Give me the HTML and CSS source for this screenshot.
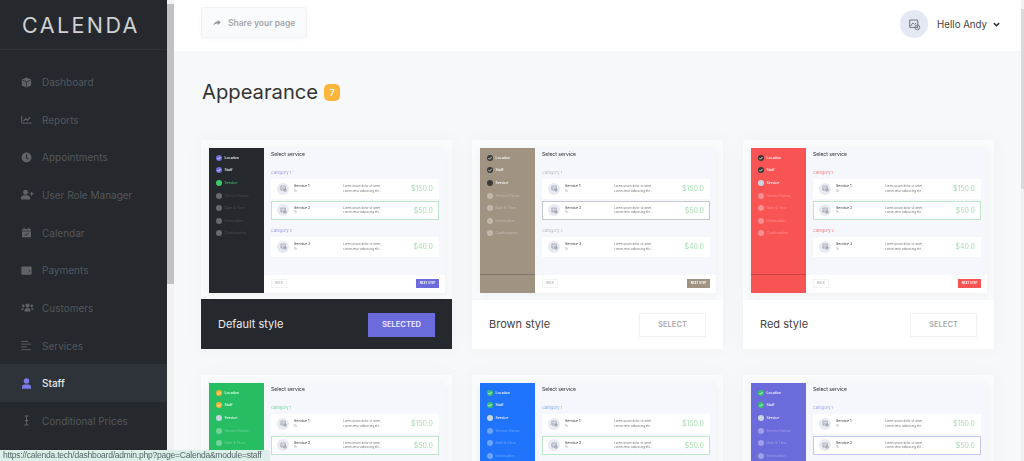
FILE: index.html
```html
<!DOCTYPE html>
<html lang="en">
<head>
<meta charset="utf-8">
<title>Appearance</title>
<link rel="stylesheet" href="styles.css">
</head>
<body>
<svg class="defs" width="0" height="0" aria-hidden="true">
  <symbol id="pic" viewBox="0 0 16 16"><path d="M2 2.5h10v9H2z" fill="none" stroke="currentColor" stroke-width="1.2"/><path d="M3 10l3-4 2 2 2-2" fill="none" stroke="currentColor" stroke-width="1.1"/><circle cx="11.5" cy="11.5" r="3" fill="none" stroke="currentColor" stroke-width="1.1"/><path d="M11.5 10v3" stroke="currentColor" stroke-width=".9"/></symbol>
  <symbol id="check" viewBox="0 0 10 10"><path d="M2.5 5.2l1.8 1.8 3.2-3.6" fill="none" stroke="currentColor" stroke-width="1.3"/></symbol>
</svg>
<div class="app">
  <aside class="sidebar">
    <div class="logo">CALENDA</div>
    <nav class="nav">
      <a class="nav-item"><svg class="nav-icon" viewBox="0 0 16 16"><path d="M8 .8l6.8 3v8.4L8 15.2 1.2 12.2V3.800z"/><path d="M2 4.300l6 2.900 6-2.900M8 7.200v7.500" fill="none" stroke="#25292e" stroke-width="1.100"/></svg>Dashboard</a>
      <a class="nav-item"><svg class="nav-icon" viewBox="0 0 16 16"><path d="M1 2.500v10.700h14.500" fill="none" stroke="currentColor" stroke-width="1.400"/><path d="M3.500 10.500l3.200-3.500 2.600 2 4.200-4.500" fill="none" stroke="currentColor" stroke-width="1.600"/></svg>Reports</a>
      <a class="nav-item"><svg class="nav-icon" viewBox="0 0 16 16"><circle cx="8" cy="8" r="7.200"/><path d="M8 3.500V8.500l3 1.800" fill="none" stroke="#25292e" stroke-width="1.500"/></svg>Appointments</a>
      <a class="nav-item"><svg class="nav-icon wide" viewBox="0 0 20 16"><circle cx="7" cy="4.500" r="3.800"/><path d="M0 15.500v-1.800C0 11 2.500 9.300 4.500 9.300h5c2 0 4.500 1.700 4.500 4.400v1.800z"/><path d="M16.500 4v6M13.500 7h6" stroke="currentColor" stroke-width="1.600"/></svg>User Role Manager</a>
      <a class="nav-item"><svg class="nav-icon" viewBox="0 0 16 16"><path d="M1.500 3h13v12h-13z"/><path d="M4.500 .8v3.500M11.500 .8v3.500" stroke="currentColor" stroke-width="1.600"/><path d="M1.500 5.800h13" stroke="#25292e"/><path d="M5 10.500l2 2 4-4" fill="none" stroke="#25292e" stroke-width="1.400"/></svg>Calendar</a>
      <a class="nav-item"><svg class="nav-icon" viewBox="0 0 16 16"><path d="M.5 3.500q0-1.500 1.500-1.500h12q1.500 0 1.500 1.500v9q0 1.500-1.500 1.500H2q-1.500 0-1.500-1.500z"/><circle cx="12.500" cy="8.500" r="1" fill="#25292e"/></svg>Payments</a>
      <a class="nav-item"><svg class="nav-icon wide" viewBox="0 0 20 16"><circle cx="10" cy="5" r="3"/><circle cx="3.500" cy="5.500" r="2"/><circle cx="16.500" cy="5.500" r="2"/><path d="M5.500 14v-2q0-3 3-3h3q3 0 3 3v2zM0 11.500q0-2.500 2.500-2.500h2L3.800 11.500zM20 11.500q0-2.500-2.500-2.500h-2l.7 2.500z"/></svg>Customers</a>
      <a class="nav-item"><svg class="nav-icon" viewBox="0 0 16 16"><path d="M.5 2h10M.5 6h14M.5 10h8M.5 14h14" stroke="currentColor" stroke-width="1.300"/></svg>Services</a>
      <a class="nav-item active"><svg class="nav-icon" viewBox="0 0 16 16"><circle cx="8" cy="4.500" r="4"/><path d="M1.500 15.500v-2.500q0-3.500 3.500-3.500h6q3.500 0 3.500 3.500v2.500z"/></svg>Staff</a>
      <a class="nav-item"><svg class="nav-icon" viewBox="0 0 16 16"><path d="M5 1.500h6M5 14.500h6M8 1.500v13M5.500 8h5" fill="none" stroke="currentColor" stroke-width="1.500"/></svg>Conditional Prices</a>
    </nav>
  </aside>
  <div class="side-scroll"><div class="side-thumb"></div></div>
  <div class="main">
    <header class="topbar">
      <button class="share"><svg class="share-icon" viewBox="0 0 16 16"><path d="M9.500 2l6 5-6 5V9C5.500 9 3 10 1 13.500 1.500 8.500 4.500 5 9.500 5z"/></svg>Share your page</button>
      <div class="user">
        <span class="avatar"><svg class="avatar-icon"><use href="#pic"/></svg></span>
        <span class="hello">Hello Andy</span>
        <svg class="chev" viewBox="0 0 10 7"><path d="M1.200 1.500L5 5.200l3.800-3.700" fill="none" stroke="currentColor" stroke-width="2.200"/></svg>
      </div>
    </header>
    <main class="content">
      <h1 class="title">Appearance <span class="badge">7</span></h1>
      <div class="grid">

        <section class="card t-default">
          <div class="shot"><div class="preview">
            <div class="p-side">
              <div class="step done"><i><svg><use href="#check"/></svg></i>Location</div>
              <div class="step done"><i><svg><use href="#check"/></svg></i>Staff</div>
              <div class="step cur"><i></i>Service</div>
              <div class="step"><i></i>Service Extras</div>
              <div class="step"><i></i>Date &amp; Time</div>
              <div class="step"><i></i>Information</div>
              <div class="step"><i></i>Confirmation</div>
            </div>
            <div class="p-body">
              <div class="p-scroll">
                <div class="p-title">Select service</div>
                <div class="p-cat">Category 1</div>
                <div class="p-row"><span class="p-ic"><svg><use href="#pic"/></svg></span><span class="p-name">Service 1<small>1h</small></span><span class="p-desc">Lorem ipsum dolor sit amet, consectetur adipiscing elit...</span><span class="p-price">$150.0</span></div>
                <div class="p-row sel"><span class="p-ic"><svg><use href="#pic"/></svg></span><span class="p-name">Service 2<small>1h</small></span><span class="p-desc">Lorem ipsum dolor sit amet, consectetur adipiscing elit...</span><span class="p-price">$50.0</span></div>
                <div class="p-cat two">Category 2</div>
                <div class="p-row"><span class="p-ic"><svg><use href="#pic"/></svg></span><span class="p-name">Service 3<small>1h</small></span><span class="p-desc">Lorem ipsum dolor sit amet, consectetur adipiscing elit...</span><span class="p-price">$40.0</span></div>
              </div>
              <div class="p-foot"><span class="p-back">BACK</span><span class="p-next">NEXT STEP</span></div>
            </div>
          </div></div>
          <div class="foot dark"><span class="name">Default style</span><span class="btn on">SELECTED</span></div>
        </section>

        <section class="card t-brown">
          <div class="shot"><div class="preview">
            <div class="p-side">
              <div class="step done"><i><svg><use href="#check"/></svg></i>Location</div>
              <div class="step done"><i><svg><use href="#check"/></svg></i>Staff</div>
              <div class="step cur"><i></i>Service</div>
              <div class="step"><i></i>Service Extras</div>
              <div class="step"><i></i>Date &amp; Time</div>
              <div class="step"><i></i>Information</div>
              <div class="step"><i></i>Confirmation</div>
              <div class="p-rule"></div>
            </div>
            <div class="p-body">
              <div class="p-scroll">
                <div class="p-title">Select service</div>
                <div class="p-cat">Category 1</div>
                <div class="p-row"><span class="p-ic"><svg><use href="#pic"/></svg></span><span class="p-name">Service 1<small>1h</small></span><span class="p-desc">Lorem ipsum dolor sit amet, consectetur adipiscing elit...</span><span class="p-price">$150.0</span></div>
                <div class="p-row sel"><span class="p-ic"><svg><use href="#pic"/></svg></span><span class="p-name">Service 2<small>1h</small></span><span class="p-desc">Lorem ipsum dolor sit amet, consectetur adipiscing elit...</span><span class="p-price">$50.0</span></div>
                <div class="p-cat two">Category 2</div>
                <div class="p-row"><span class="p-ic"><svg><use href="#pic"/></svg></span><span class="p-name">Service 3<small>1h</small></span><span class="p-desc">Lorem ipsum dolor sit amet, consectetur adipiscing elit...</span><span class="p-price">$40.0</span></div>
              </div>
              <div class="p-foot"><span class="p-back">BACK</span><span class="p-next">NEXT STEP</span></div>
            </div>
          </div></div>
          <div class="foot"><span class="name">Brown style</span><span class="btn">SELECT</span></div>
        </section>

        <section class="card t-red">
          <div class="shot"><div class="preview">
            <div class="p-side">
              <div class="step done"><i><svg><use href="#check"/></svg></i>Location</div>
              <div class="step done"><i><svg><use href="#check"/></svg></i>Staff</div>
              <div class="step cur"><i></i>Service</div>
              <div class="step"><i></i>Service Extras</div>
              <div class="step"><i></i>Date &amp; Time</div>
              <div class="step"><i></i>Information</div>
              <div class="step"><i></i>Confirmation</div>
              <div class="p-rule"></div>
            </div>
            <div class="p-body">
              <div class="p-scroll">
                <div class="p-title">Select service</div>
                <div class="p-cat">Category 1</div>
                <div class="p-row"><span class="p-ic"><svg><use href="#pic"/></svg></span><span class="p-name">Service 1<small>1h</small></span><span class="p-desc">Lorem ipsum dolor sit amet, consectetur adipiscing elit...</span><span class="p-price">$150.0</span></div>
                <div class="p-row sel"><span class="p-ic"><svg><use href="#pic"/></svg></span><span class="p-name">Service 2<small>1h</small></span><span class="p-desc">Lorem ipsum dolor sit amet, consectetur adipiscing elit...</span><span class="p-price">$50.0</span></div>
                <div class="p-cat two">Category 2</div>
                <div class="p-row"><span class="p-ic"><svg><use href="#pic"/></svg></span><span class="p-name">Service 3<small>1h</small></span><span class="p-desc">Lorem ipsum dolor sit amet, consectetur adipiscing elit...</span><span class="p-price">$40.0</span></div>
              </div>
              <div class="p-foot"><span class="p-back">BACK</span><span class="p-next">NEXT STEP</span></div>
            </div>
          </div></div>
          <div class="foot"><span class="name">Red style</span><span class="btn">SELECT</span></div>
        </section>

        <section class="card t-green">
          <div class="shot"><div class="preview">
            <div class="p-side">
              <div class="step done"><i><svg><use href="#check"/></svg></i>Location</div>
              <div class="step done"><i><svg><use href="#check"/></svg></i>Staff</div>
              <div class="step cur"><i></i>Service</div>
              <div class="step"><i></i>Service Extras</div>
              <div class="step"><i></i>Date &amp; Time</div>
            </div>
            <div class="p-body">
              <div class="p-scroll">
                <div class="p-title">Select service</div>
                <div class="p-cat">Category 1</div>
                <div class="p-row"><span class="p-ic"><svg><use href="#pic"/></svg></span><span class="p-name">Service 1<small>1h</small></span><span class="p-desc">Lorem ipsum dolor sit amet, consectetur adipiscing elit...</span><span class="p-price">$150.0</span></div>
                <div class="p-row sel"><span class="p-ic"><svg><use href="#pic"/></svg></span><span class="p-name">Service 2<small>1h</small></span><span class="p-desc">Lorem ipsum dolor sit amet, consectetur adipiscing elit...</span><span class="p-price">$50.0</span></div>
              </div>
            </div>
          </div></div>
        </section>

        <section class="card t-blue">
          <div class="shot"><div class="preview">
            <div class="p-side">
              <div class="step done"><i><svg><use href="#check"/></svg></i>Location</div>
              <div class="step done"><i><svg><use href="#check"/></svg></i>Staff</div>
              <div class="step cur"><i></i>Service</div>
              <div class="step"><i></i>Service Extras</div>
              <div class="step"><i></i>Date &amp; Time</div>
              <div class="step"><i></i>Information</div>
            </div>
            <div class="p-body">
              <div class="p-scroll">
                <div class="p-title">Select service</div>
                <div class="p-cat">Category 1</div>
                <div class="p-row"><span class="p-ic"><svg><use href="#pic"/></svg></span><span class="p-name">Service 1<small>1h</small></span><span class="p-desc">Lorem ipsum dolor sit amet, consectetur adipiscing elit...</span><span class="p-price">$150.0</span></div>
                <div class="p-row sel"><span class="p-ic"><svg><use href="#pic"/></svg></span><span class="p-name">Service 2<small>1h</small></span><span class="p-desc">Lorem ipsum dolor sit amet, consectetur adipiscing elit...</span><span class="p-price">$50.0</span></div>
              </div>
            </div>
          </div></div>
        </section>

        <section class="card t-purple">
          <div class="shot"><div class="preview">
            <div class="p-side">
              <div class="step done"><i><svg><use href="#check"/></svg></i>Location</div>
              <div class="step done"><i><svg><use href="#check"/></svg></i>Staff</div>
              <div class="step cur"><i></i>Service</div>
              <div class="step"><i></i>Service Extras</div>
              <div class="step"><i></i>Date &amp; Time</div>
              <div class="step"><i></i>Information</div>
            </div>
            <div class="p-body">
              <div class="p-scroll">
                <div class="p-title">Select service</div>
                <div class="p-cat">Category 1</div>
                <div class="p-row"><span class="p-ic"><svg><use href="#pic"/></svg></span><span class="p-name">Service 1<small>1h</small></span><span class="p-desc">Lorem ipsum dolor sit amet, consectetur adipiscing elit...</span><span class="p-price">$150.0</span></div>
                <div class="p-row sel"><span class="p-ic"><svg><use href="#pic"/></svg></span><span class="p-name">Service 2<small>1h</small></span><span class="p-desc">Lorem ipsum dolor sit amet, consectetur adipiscing elit...</span><span class="p-price">$50.0</span></div>
              </div>
            </div>
          </div></div>
        </section>

      </div>
    </main>
  </div>
  <div class="page-scroll"><div class="page-thumb"></div></div>
</div>
<div class="status">https://calenda.tech/dashboard/admin.php?page=Calenda&amp;module=staff</div>
</body>
</html>
```
FILE: styles.css
```css
* { box-sizing: border-box; }
html, body { margin: 0; height: 100%; overflow: hidden; }
body { font-family: Inter, "Noto Sans", sans-serif; background: #f7f8fa; color: #333; }
.defs { position: absolute; }
.app { display: flex; height: 461px; overflow: hidden; }

/* sidebar */
.sidebar { width: 167px; flex: none; background: #25292e; display: flex; flex-direction: column; }
.logo { height: 50px; padding: 12px 0 0 22px; border-bottom: 1px solid #2e3237; color: #cfd1d2; font-size: 21.500px; line-height: 26px; font-weight: 400; letter-spacing: 2.400px; }
.nav { display: flex; flex-direction: column; padding-top: 13.200px; }
.nav-item { height: 37.660px; flex: none; display: flex; align-items: center; padding-left: 21px; font-size: 10px; color: #53575c; }
.nav-item.active { background: #2e333a; color: #e8e9ea; font-weight: 500; }
.nav-icon { width: 11px; height: 11px; margin-right: 10px; flex: none; fill: #5f6367; color: #5f6367; }
.nav-icon.wide { width: 13px; margin-right: 8px; }
.active .nav-icon { fill: #7b7be8; color: #7b7be8; }

.side-scroll { width: 7px; flex: none; background: #f1f1f1; padding-top: 4px; }
.side-thumb { height: 280px; background: #c1c1c1; }

/* main */
.main { flex: 1; min-width: 0; display: flex; flex-direction: column; }
.topbar { height: 51px; flex: none; background: #fff; display: flex; align-items: flex-start; justify-content: space-between; padding: 7px 21px 0 27px; }
.share { width: 106px; height: 31px; display: flex; align-items: center; padding: 0 0 0 11px; gap: 7px; background: #f9fafb; border: 1px solid #f1f2f4; border-radius: 3px; color: #a4a7ab; font: 600 8.5px Inter, sans-serif; box-shadow: 0 1px 4px rgba(0,0,0,.03); white-space: nowrap; }
.share-icon { width: 8px; height: 8px; fill: #8f9296; flex: none; }
.user { display: flex; align-items: center; padding-top: 3px; }
.avatar { width: 28px; height: 28px; border-radius: 50%; background: #e4e8f2; display: flex; align-items: center; justify-content: center; color: #6d7280; }
.avatar-icon { width: 13px; height: 13px; }
.hello { margin-left: 9px; font-size: 9.700px; color: #444; white-space: nowrap; }
.chev { width: 7px; height: 5px; margin-left: 6px; color: #333; }

.content { flex: 1; padding: 0 0 0 27px; }
.title { margin: 28px 0 0 1px; height: 61px; display: flex; align-items: flex-start; gap: 6px; font-size: 20.200px; line-height: 26px; font-weight: 400; color: #333; }
.badge { width: 16px; height: 17px; margin-top: 5px; background: #fbb53b; border-radius: 5px; color: #fff; font-size: 9.5px; line-height: 17px; font-weight: 500; text-align: center; }
.grid { display: grid; grid-template-columns: repeat(3, 251px); gap: 26px 20px; }

/* card */
.card { --c: #6c6bdc; --side: #25292e; --done: #6c6bdc; --cur: #3fc96a; --sel: #bfe6c8; --cat: #9a98e0; height: 209px; display: flex; flex-direction: column; box-shadow: 0 0 18px rgba(30,40,70,.035); }
.t-brown { --c: #a09382; --side: #a09382; --done: #3a3a38; --cur: #3a3a38; --sel: #c4c7cc; --cat: #b9bbbd; }
.t-red { --c: #f95454; --side: #f95454; --done: #3a3a38; --cur: #c9d6e2; --sel: #bfe6c8; --cat: #f27a7a; }
.t-green { --c: #27bd63; --side: #27bd63; --done: #f5b335; --cur: #c9d6e2; --sel: #bfe6c8; --cat: #6fd69a; }
.t-blue { --c: #1f74fb; --side: #1f74fb; --done: #37c06f; --cur: #c9d6e2; --sel: #bfe6c8; --cat: #7aa9f5; }
.t-purple { --c: #6c6bdc; --side: #6c6bdc; --done: #37c06f; --cur: #c9d6e2; --sel: #c6c5ee; --cat: #a09fe8; }

.shot { height: 159px; flex: none; padding: 7.500px 7px 6.500px 7.500px; background: #fafbfc; }
.preview { height: 145px; display: flex; box-shadow: 0 2px 10px rgba(30,40,70,.06); filter: blur(.25px); }
.p-side { position: relative; width: 55.500px; flex: none; background: var(--side); padding-top: 4px; }
.step { height: 12.600px; display: flex; align-items: center; padding-left: 7.500px; gap: 2.500px; font-size: 3.500px; font-weight: 500; color: rgba(255,255,255,.3); white-space: nowrap; }
.step i { width: 6px; height: 6px; flex: none; border-radius: 50%; background: rgba(255,255,255,.35); color: #fff; display: block; }
.step svg { display: block; width: 6px; height: 6px; }
.step.done { color: #fff; }
.step.done i { background: var(--done); }
.step.cur { color: #fff; }
.step.cur i { background: var(--cur); }
.t-default .step { color: rgba(255,255,255,.14); }
.t-default .step i { background: rgba(255,255,255,.3); }
.t-default .step.done { color: #fff; }
.t-default .step.done i { background: var(--done); }
.t-default .step.cur { color: var(--cur); }
.t-default .step.cur i { background: var(--cur); }
.p-rule { position: absolute; left: 0; right: 0; bottom: 18px; border-top: 1px solid rgba(0,0,0,.2); }

.p-body { flex: 1; min-width: 0; display: flex; flex-direction: column; background: #f6f7fc; }
.p-scroll { flex: 1; padding: 3px 6px 0 7px; }
.p-title { height: 20.500px; font-size: 5px; line-height: 7px; font-weight: 500; color: #444; }
.p-cat { height: 8px; font-size: 4px; line-height: 4px; color: var(--cat); }
.p-cat.two { margin-top: 8.500px; height: 8.500px; }
.p-row { height: 19.500px; margin-bottom: 2px; background: #fff; display: flex; align-items: center; padding: 0 5px; border: 1px solid transparent; }
.p-row.sel { border-color: var(--sel); }
.p-ic { width: 12px; height: 12px; flex: none; border-radius: 50%; background: #e8eaf1; color: #7b8090; display: flex; align-items: center; justify-content: center; }
.p-ic svg { width: 7px; height: 7px; }
.p-name { width: 49px; margin-left: 5px; flex: none; font-size: 3.600px; line-height: 4.500px; font-weight: 500; color: #444; }
.p-name small { display: block; font-size: 2.800px; font-weight: 400; color: #999; }
.p-desc { width: 42px; flex: none; font-size: 2.900px; line-height: 4.300px; color: #777; }
.p-price { flex: 1; text-align: right; font-size: 7px; color: #a6dcb0; }
.p-foot { height: 18px; flex: none; background: #fff; display: flex; align-items: center; justify-content: space-between; padding: 0 6px 0 7px; }
.p-back { width: 16px; height: 9px; border: 1px solid #f2f3f5; font-size: 2.800px; line-height: 7px; color: #999; text-align: center; }
.p-next { width: 23px; height: 9px; background: var(--c); font-size: 2.800px; line-height: 9px; color: #fff; font-weight: 700; text-align: center; white-space: nowrap; }

.foot { height: 50px; flex: none; background: #fff; display: flex; align-items: center; justify-content: space-between; padding: 0 17px; border-top: 1px solid #f7f8f9; }
.foot.dark { background: #25292e; color: #eee; border-color: #25292e; }
.name { font-size: 11px; line-height: 12px; margin-top: -1px; color: #444; }
.dark .name { color: #eceded; }
.btn { width: 67px; height: 24px; font-size: 7.600px; line-height: 22px; font-weight: 600; text-align: center; color: #a9abae; background: #fff; border: 1px solid #f0f1f3; box-shadow: 0 1px 4px rgba(0,0,0,.03); }
.btn.on { background: #6c6bdc; color: #eef; border-color: #6c6bdc; box-shadow: none; }

.page-scroll { width: 3px; flex: none; background: #f1f1f1; padding-top: 9px; }
.page-thumb { height: 180px; background: #d9d9d9; }

.status { position: fixed; left: 0; bottom: 0; width: 270px; height: 11px; padding-left: 3px; background: #dcefe8; color: #56646a; font: 8.500px/11px "Liberation Sans", sans-serif; letter-spacing: -.22px; white-space: nowrap; overflow: hidden; border-top-right-radius: 2px; }
```
